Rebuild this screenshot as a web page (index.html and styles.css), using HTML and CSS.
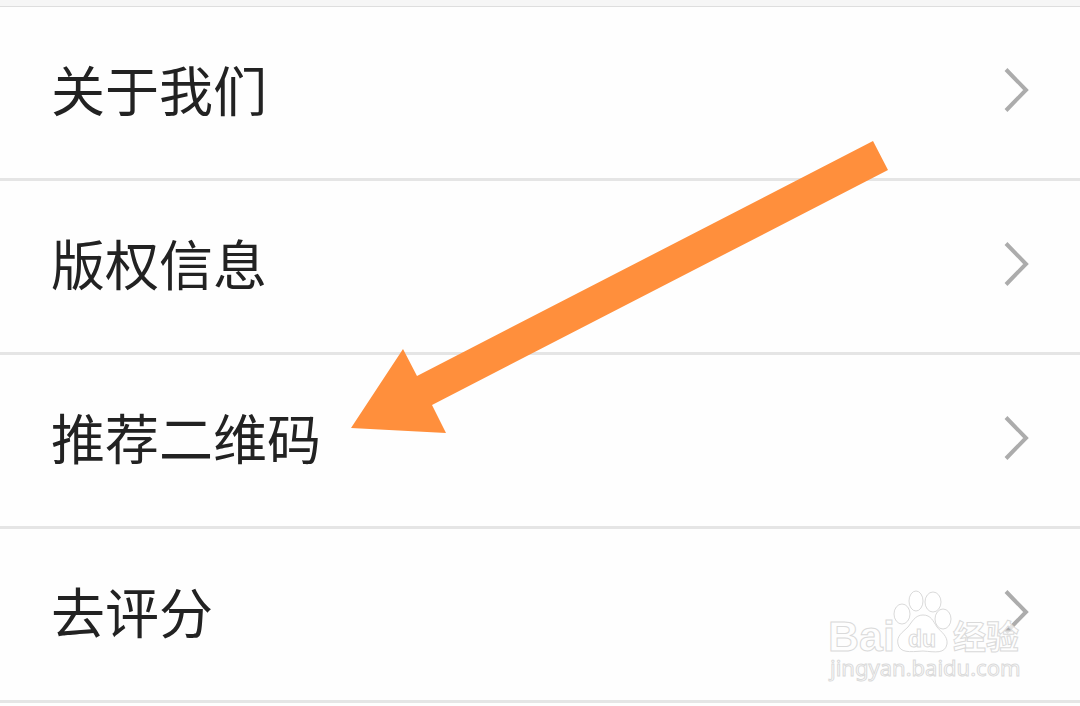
FILE: index.html
```html
<!DOCTYPE html>
<html lang="zh-CN">
<head>
<meta charset="utf-8">
<meta name="viewport" content="width=device-width, initial-scale=1">
<title>关于我们</title>
<link rel="stylesheet" href="styles.css">
</head>
<body>
<main class="screen">
  <div class="strip"></div>
  <nav>
    <ul class="menu">
      <li><a class="row" href="#about"><span class="label">关于我们</span><svg class="chevron" viewBox="0 0 30 48" aria-hidden="true"><path d="M4 3.500 24 24 4 44.500"/></svg></a></li>
      <li><a class="row" href="#copyright"><span class="label">版权信息</span><svg class="chevron" viewBox="0 0 30 48" aria-hidden="true"><path d="M4 3.500 24 24 4 44.500"/></svg></a></li>
      <li><a class="row" href="#qrcode"><span class="label">推荐二维码</span><svg class="chevron" viewBox="0 0 30 48" aria-hidden="true"><path d="M4 3.500 24 24 4 44.500"/></svg></a></li>
      <li><a class="row" href="#rate"><span class="label">去评分</span><svg class="chevron" viewBox="0 0 30 48" aria-hidden="true"><path d="M4 3.500 24 24 4 44.500"/></svg></a></li>
    </ul>
  </nav>
  <svg class="arrow" viewBox="0 0 540 296" aria-hidden="true">
    <path d="M1 288 53 209 67 236 523 1 538 30 82 265 96 293Z"/>
  </svg>
  <svg class="watermark" viewBox="0 0 200 104" role="img" aria-label="Baidu 经验">
    <text class="brand" x="3" y="66">Bai</text>
    <ellipse cx="77" cy="29" rx="8" ry="10"/>
    <ellipse cx="91" cy="16" rx="7" ry="10"/>
    <ellipse cx="108" cy="17" rx="8" ry="10"/>
    <ellipse cx="118" cy="34" rx="8" ry="10"/>
    <path d="M98 30C90 30 87 37 83 42C78 47 71 51 73 59C75 68 84 67 98 66C111 67 120 69 122 59C123 51 116 47 112 42C108 36 106 30 98 30Z"/>
    <text class="paw-text" x="83" y="62">du</text>
    <text class="channel" x="128" y="64">经验</text>
    <text class="site" x="5" y="91">jingyan.baidu.com</text>
  </svg>
</main>
</body>
</html>
```
FILE: styles.css
```css
* {
  box-sizing: border-box;
}

body {
  margin: 0;
  background: #fefefe;
  color: #222;
  font-family: "Noto Sans CJK SC", sans-serif;
}

.screen {
  position: relative;
  min-height: 100vh;
  overflow: hidden;
}

.strip {
  height: 7px;
  background: #f6f6f6;
  border-bottom: 1px solid #dedede;
}

.menu {
  margin: 0;
  padding: 0;
  list-style: none;
}

.row {
  display: flex;
  align-items: center;
  justify-content: space-between;
  padding: 42px 48px 47px 51px;
  border-bottom: 3px solid #e5e5e5;
  color: inherit;
  font-size: 54px;
  line-height: 80px;
  text-decoration: none;
}

.label {
  padding-bottom: 2px;
}

.chevron {
  width: 30px;
  height: 48px;
  fill: none;
  stroke: #acacac;
  stroke-width: 4;
}

.arrow {
  position: absolute;
  top: 140px;
  left: 350px;
  width: 540px;
  height: 296px;
  fill: #ff8f3c;
}

.watermark {
  position: absolute;
  top: 585px;
  right: 55px;
  width: 200px;
  height: 104px;
  fill: rgba(255, 255, 255, 0.7);
  stroke: #dadada;
  stroke-width: 1;
}

.brand {
  font: bold 43px "Liberation Sans", sans-serif;
}

.paw-text {
  font: bold 23px "Liberation Sans", sans-serif;
}

.channel {
  font: bold 33px "Noto Sans CJK SC", sans-serif;
}

.site {
  font: 22px "Noto Sans", sans-serif;
}
```
